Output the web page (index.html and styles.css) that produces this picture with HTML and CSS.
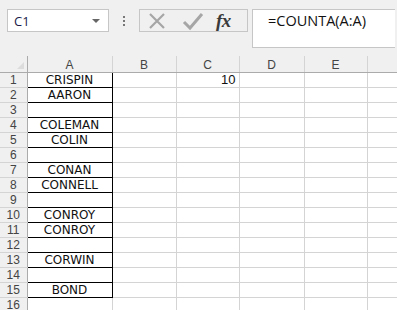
FILE: index.html
```html
<!DOCTYPE html>
<html>
<head>
<meta charset="utf-8">
<link rel="stylesheet" href="styles.css">
</head>
<body>
<div class="app">
  <div class="fbar">
    <div class="namebox"><span class="nb-text">C1</span><span class="nb-arrow"></span></div>
    <div class="dots"><i></i><i></i><i></i></div>
    <div class="fx-buttons">
      <svg class="btn-x" width="20" height="20" viewBox="0 0 20 20"><path d="M3 3 L17 17 M17 3 L3 17" stroke="#a6a6a6" stroke-width="2.2" fill="none"/></svg>
      <svg class="btn-ok" width="22" height="20" viewBox="0 0 22 20"><path d="M2 11 L8 17 L20 3" stroke="#a6a6a6" stroke-width="3" fill="none"/></svg>
      <span class="fx">fx</span>
    </div>
    <div class="finput">=COUNTA(A:A)</div>
  </div>
  <table class="sheet">
    <colgroup>
      <col class="c-rh"><col class="c-a"><col class="c-b"><col class="c-c"><col class="c-d"><col class="c-e"><col class="c-f">
    </colgroup>
    <thead>
      <tr><th class="corner"><span class="tri"></span></th><th>A</th><th>B</th><th>C</th><th>D</th><th>E</th><th class="last"></th></tr>
    </thead>
    <tbody>
      <tr><th>1</th><td class="a">CRISPIN</td><td></td><td class="num">10</td><td></td><td></td><td></td></tr>
      <tr><th>2</th><td class="a">AARON</td><td></td><td></td><td></td><td></td><td></td></tr>
      <tr><th>3</th><td class="a"></td><td></td><td></td><td></td><td></td><td></td></tr>
      <tr><th>4</th><td class="a">COLEMAN</td><td></td><td></td><td></td><td></td><td></td></tr>
      <tr><th>5</th><td class="a">COLIN</td><td></td><td></td><td></td><td></td><td></td></tr>
      <tr><th>6</th><td class="a"></td><td></td><td></td><td></td><td></td><td></td></tr>
      <tr><th>7</th><td class="a">CONAN</td><td></td><td></td><td></td><td></td><td></td></tr>
      <tr><th>8</th><td class="a">CONNELL</td><td></td><td></td><td></td><td></td><td></td></tr>
      <tr><th>9</th><td class="a"></td><td></td><td></td><td></td><td></td><td></td></tr>
      <tr><th>10</th><td class="a">CONROY</td><td></td><td></td><td></td><td></td><td></td></tr>
      <tr><th>11</th><td class="a">CONROY</td><td></td><td></td><td></td><td></td><td></td></tr>
      <tr><th>12</th><td class="a"></td><td></td><td></td><td></td><td></td><td></td></tr>
      <tr><th>13</th><td class="a">CORWIN</td><td></td><td></td><td></td><td></td><td></td></tr>
      <tr><th>14</th><td class="a"></td><td></td><td></td><td></td><td></td><td></td></tr>
      <tr><th>15</th><td class="a">BOND</td><td></td><td></td><td></td><td></td><td></td></tr>
      <tr><th>16</th><td class="a16"></td><td></td><td></td><td></td><td></td><td></td></tr>
    </tbody>
  </table>
</div>
</body>
</html>
```
FILE: styles.css
```css
html, body { margin: 0; padding: 0; }
body { background: #f0f0f0; width: 397px; height: 310px; overflow: hidden; font-family: "DejaVu Sans", Verdana, sans-serif; }
.app { width: 397px; }
.fbar { display: flex; align-items: flex-start; height: 56px; padding: 9px 0 0 7px; box-sizing: border-box; }
.namebox { width: 102px; height: 23px; box-sizing: border-box; border: 1px solid #c6c6c6; background: #fff; display: flex; align-items: center; justify-content: space-between; padding: 0 8px 0 6px; }
.nb-text { font-family: "Open Sans", "Liberation Sans", sans-serif; font-size: 13px; color: #1b1b4b; }
.nb-arrow { width: 0; height: 0; border-left: 4px solid transparent; border-right: 4px solid transparent; border-top: 4px solid #666; }
.dots { width: 30px; height: 23px; display: flex; flex-direction: column; align-items: center; justify-content: center; gap: 2px; }
.dots i { width: 2px; height: 2px; background: #777; display: block; }
.fx-buttons { width: 109px; height: 23px; box-sizing: border-box; border: 1px solid #c6c6c6; background: #f0f0f0; display: flex; align-items: center; padding-left: 7px; }
.btn-x { margin-right: 15px; }
.btn-ok { margin-right: 12px; }
.fx { font-family: "Liberation Serif", "DejaVu Serif", serif; font-style: italic; font-weight: bold; font-size: 19px; color: #3a3a3a; letter-spacing: -0.5px; line-height: 20px; }
.finput { margin-left: 4px; width: 143px; height: 39px; box-sizing: border-box; border: 1px solid #c6c6c6; border-right: none; background: #fff; font-family: "Open Sans", "Liberation Sans", sans-serif; font-size: 14.5px; color: #111; padding: 1px 0 0 15px; line-height: 20px; }
.sheet { border-collapse: collapse; table-layout: fixed; width: 397px; background: #fff; }
col.c-rh { width: 27px; }
col.c-a { width: 85px; }
col.c-b { width: 64px; }
col.c-c { width: 63px; }
col.c-d { width: 65px; }
col.c-e { width: 63px; }
col.c-f { width: 30px; }
.sheet th, .sheet td { padding: 0; height: 15px; box-sizing: border-box; border: 1px solid #d4d4d4; font-size: 12px; line-height: 14px; white-space: nowrap; vertical-align: bottom; }
.sheet thead th { height: 16px; background: #f0f0f0; color: #444; font-weight: normal; font-family: "Liberation Sans", Arial, sans-serif; font-size: 12px; border-top: none; border-bottom: 1px solid #ababab; border-left: 1px solid #d4d4d4; border-right: 1px solid #d4d4d4; }
.sheet thead th.corner { border-left: none; border-right: 1px solid #ababab; position: relative; }
.tri { position: absolute; right: 3px; bottom: 3px; width: 0; height: 0; border-left: 7px solid transparent; border-bottom: 7px solid #dcdcdc; }
.sheet tbody th { background: #f0f0f0; color: #444; font-weight: normal; font-family: "Liberation Sans", Arial, sans-serif; font-size: 12px; border-left: none; border-right: 1px solid #ababab; border-top-color: #d4d4d4; text-align: center; }
.sheet td.a { border: 1px solid #000; text-align: center; color: #111; }
.sheet td.a16 { border-top: 1px solid #000; }
.sheet td.num { text-align: right; padding-right: 3px; font-size: 13px; font-family: "Liberation Sans", Arial, sans-serif; color: #111; }
```
